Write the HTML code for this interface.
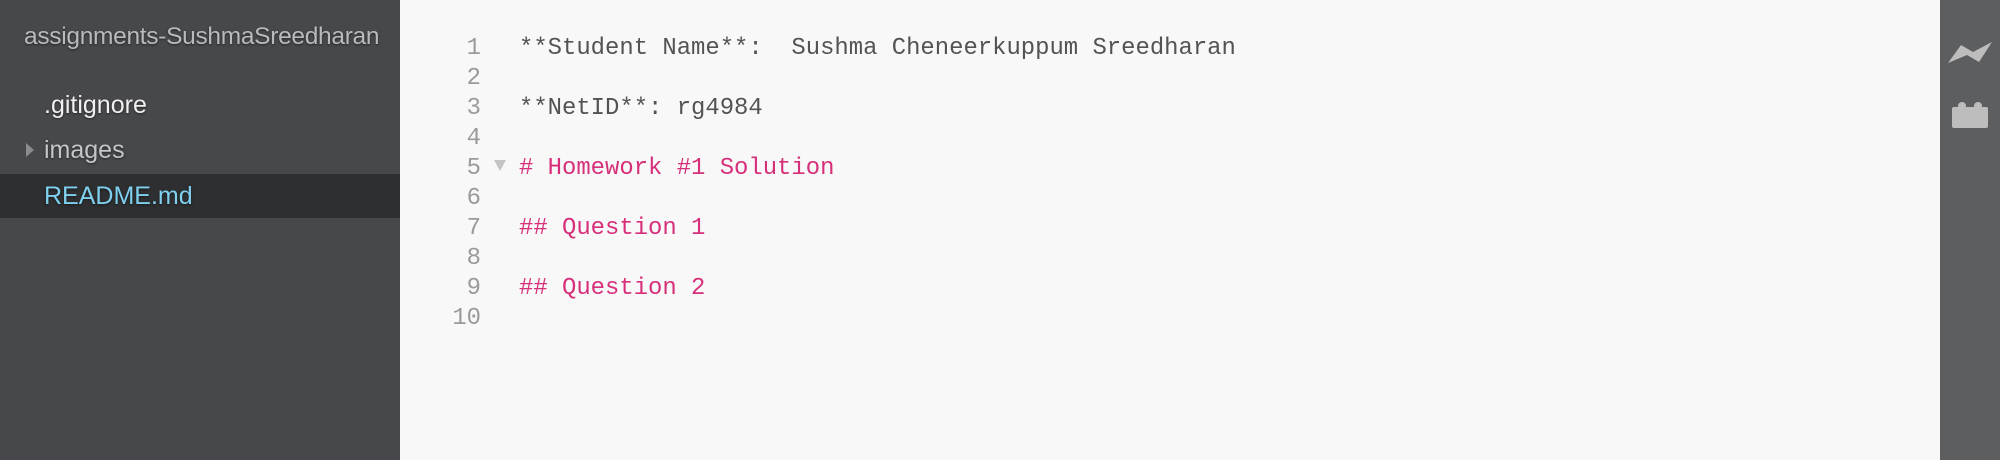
<!DOCTYPE html>
<html><head><meta charset="utf-8"><style>
html,body{margin:0;padding:0;width:2000px;height:460px;overflow:hidden;background:#f8f8f8}
#side{position:absolute;left:0;top:0;width:400px;height:460px;background:#47484b;font-family:"Liberation Sans",sans-serif;}
.t{position:absolute;white-space:nowrap;text-shadow:0 1px 2px rgba(0,0,0,.5)}
#sel{position:absolute;left:0;top:174px;width:400px;height:44px;background:#2e2f31}
#right{position:absolute;left:1940px;top:0;width:60px;height:460px;background:#5d5e60}
#ed{position:absolute;left:400px;top:0;width:1540px;height:460px;font-family:"Liberation Mono",monospace;font-size:23.9px}
.ln{position:absolute;left:0;width:81px;text-align:right;color:#9a9a9a}
.tx{position:absolute;left:119px;white-space:pre;color:#535353}
.pk{color:#d6307a}
</style></head><body>
<div id="side">
<div id="sel"></div>
<div class="t" style="left:24px;top:23px;font-size:24.5px;letter-spacing:-0.3px;color:#b8babd">assignments-SushmaSreedharan</div>
<div class="t" style="left:44px;top:91px;font-size:25px;color:#f0f0f0">.gitignore</div>
<div style="position:absolute;left:26px;top:143px;width:0;height:0;border-top:7px solid transparent;border-bottom:7px solid transparent;border-left:8px solid #8a8c8f"></div>
<div class="t" style="left:44px;top:136px;font-size:25px;color:#c4c6c8">images</div>
<div class="t" style="left:44px;top:182px;font-size:25px;color:#7fcfee">README.md</div>
</div>
<div id="ed">
<div class="ln" style="top:35px">1</div><div class="tx" style="top:35px">**Student Name**:  Sushma Cheneerkuppum Sreedharan</div>
<div class="ln" style="top:65px">2</div>
<div class="ln" style="top:95px">3</div><div class="tx" style="top:95px">**NetID**: rg4984</div>
<div class="ln" style="top:125px">4</div>
<div class="ln" style="top:155px">5</div>
<div style="position:absolute;left:94px;top:160px;width:0;height:0;border-left:6px solid transparent;border-right:6px solid transparent;border-top:11px solid #c4c4c4"></div>
<div class="tx pk" style="top:155px"># Homework #1 Solution</div>
<div class="ln" style="top:185px">6</div>
<div class="ln" style="top:215px">7</div><div class="tx pk" style="top:215px">## Question 1</div>
<div class="ln" style="top:245px">8</div>
<div class="ln" style="top:275px">9</div><div class="tx pk" style="top:275px">## Question 2</div>
<div class="ln" style="top:305px">10</div>
</div>
<div id="right">
<svg width="60" height="160" style="position:absolute;left:0;top:0">
<path d="M8 63 L21 45 L33 52 L52 42 L39 62 L27 55 Z" fill="#bdbdbd"/>
<rect x="12" y="107" width="36" height="21" rx="2" fill="#bdbdbd"/>
<rect x="18" y="102" width="8" height="8" rx="4" fill="#bdbdbd"/>
<rect x="34" y="102" width="8" height="8" rx="4" fill="#bdbdbd"/>
</svg>
</div>
</body></html>
